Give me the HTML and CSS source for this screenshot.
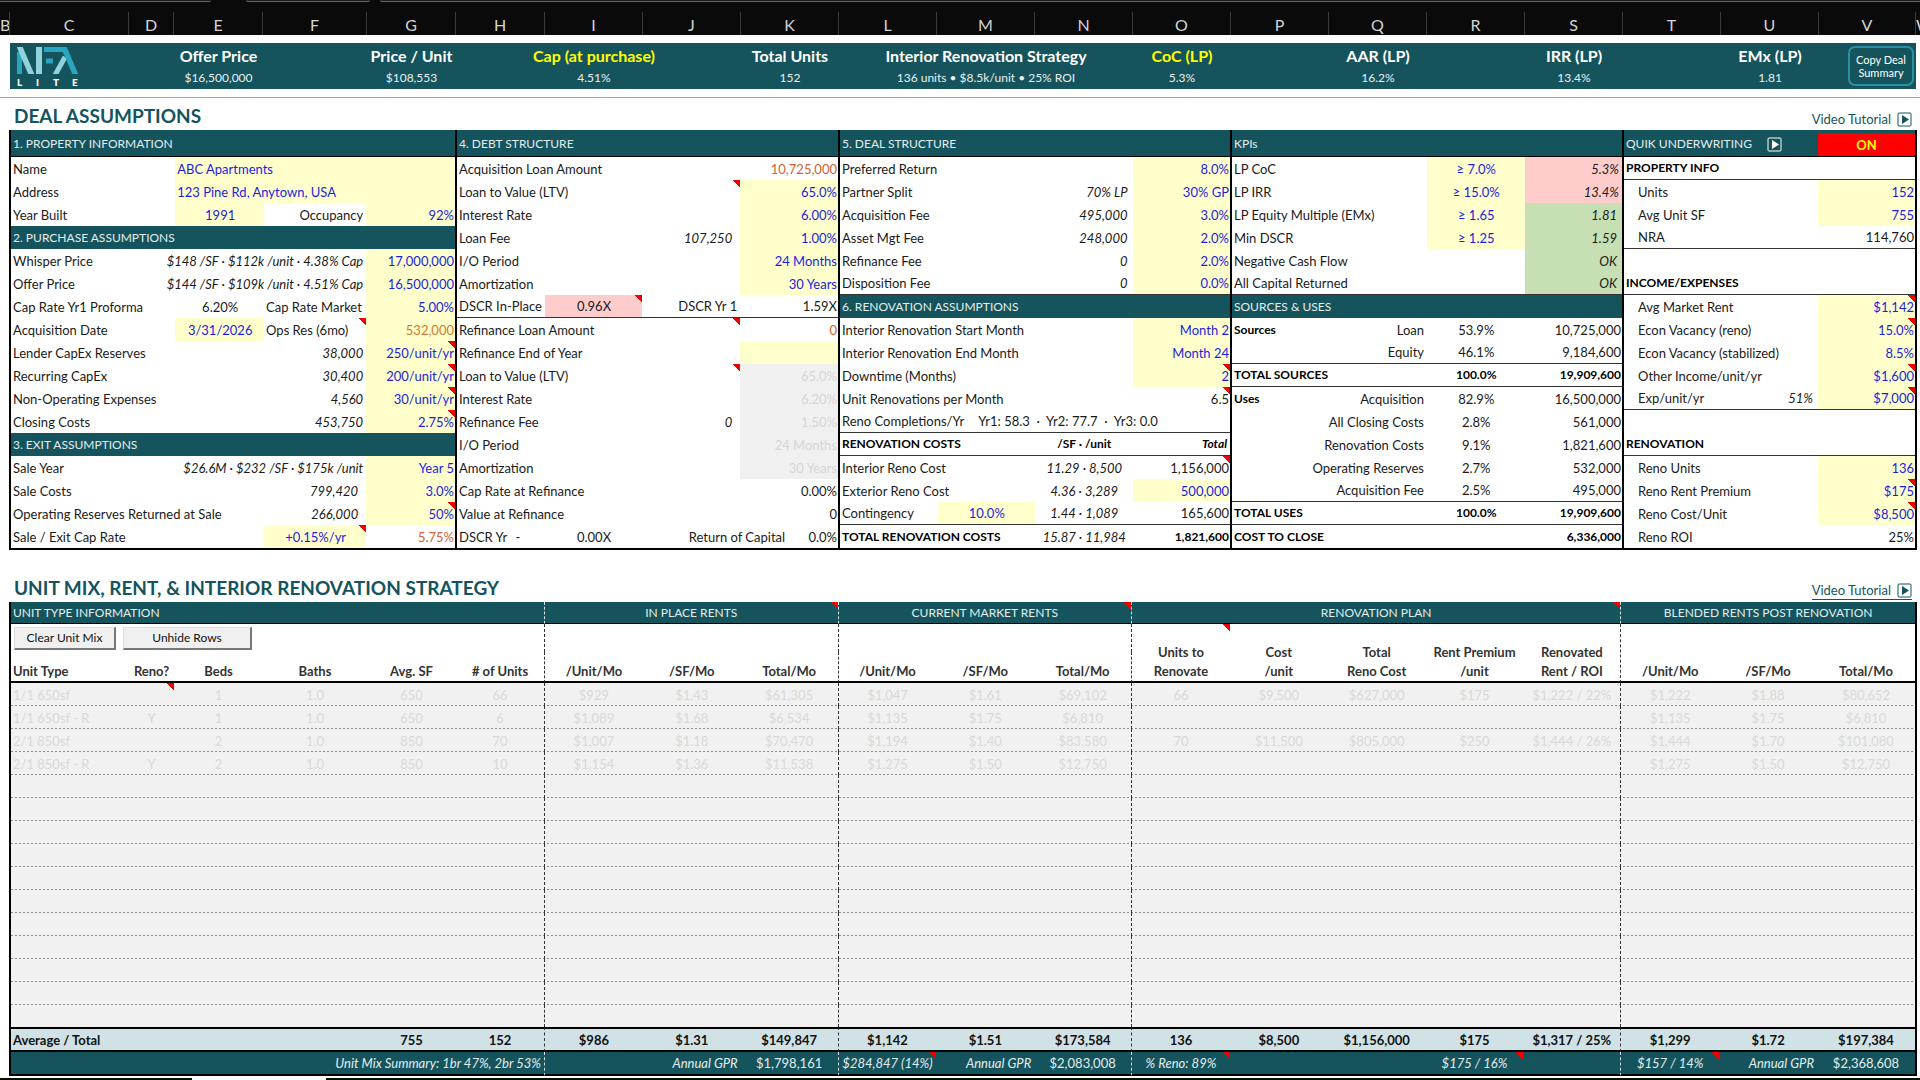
FILE: index.html
```html
<!DOCTYPE html>
<html lang="en">
<head>
<meta charset="utf-8">
<title>Deal Assumptions</title>
<link rel="stylesheet" href="styles.css">
</head>
<body>
<header class="ruler">
  <div class="tabs"><span class="tab tab-a"></span><span class="tab tab-b"></span><span class="tab tab-c"></span></div>
  <div class="letters">
    <span>B</span><span>C</span><span>D</span><span>E</span><span>F</span><span>G</span><span>H</span><span>I</span><span>J</span><span>K</span><span>L</span><span>M</span><span>N</span><span>O</span><span>P</span><span>Q</span><span>R</span><span>S</span><span>T</span><span>U</span><span>V</span><span>W</span>
  </div>
</header>

<section class="summary">
  <svg class="logo" viewBox="0 0 64 46" role="img" aria-label="NFA Lite">
    <defs><clipPath id="mark"><rect x="1" y="4" width="62" height="27"/></clipPath></defs>
    <g clip-path="url(#mark)" stroke-width="5">
      <line x1="3.500" y1="9" x2="3.500" y2="32" stroke="#2aa5bf"/>
      <line x1="2" y1="0" x2="17" y2="35" stroke="#8fd3dc" stroke-width="5.500"/>
      <line x1="23" y1="2" x2="23" y2="33" stroke="#8fd3dc" stroke-width="6"/>
      <line x1="28" y1="6.500" x2="48" y2="6.500" stroke="#2aa5bf"/>
      <line x1="30" y1="18" x2="37" y2="18" stroke="#2aa5bf"/>
      <line x1="49" y1="14" x2="38" y2="34" stroke="#8fd3dc"/>
      <line x1="46" y1="0" x2="61" y2="35" stroke="#2aa5bf" stroke-width="5.500"/>
    </g>
    <text y="43"><tspan x="1">L</tspan><tspan x="20">I</tspan><tspan x="37">T</tspan><tspan x="56">E</tspan></text>
  </svg>
  <dl class="kpi k-e"><dt>Offer Price</dt><dd>$16,500,000</dd></dl>
  <dl class="kpi k-g"><dt>Price / Unit</dt><dd>$108,553</dd></dl>
  <dl class="kpi k-i hot"><dt>Cap (at purchase)</dt><dd>4.51%</dd></dl>
  <dl class="kpi k-k"><dt>Total Units</dt><dd>152</dd></dl>
  <dl class="kpi k-m"><dt>Interior Renovation Strategy</dt><dd>136 units • $8.5k/unit • 25% ROI</dd></dl>
  <dl class="kpi k-o hot"><dt>CoC (LP)</dt><dd>5.3%</dd></dl>
  <dl class="kpi k-q"><dt>AAR (LP)</dt><dd>16.2%</dd></dl>
  <dl class="kpi k-s"><dt>IRR (LP)</dt><dd>13.4%</dd></dl>
  <dl class="kpi k-u"><dt>EMx (LP)</dt><dd>1.81</dd></dl>
  <button class="copy" type="button">Copy Deal Summary</button>
</section>

<main>
<div class="title-row">
  <h1>DEAL ASSUMPTIONS</h1>
  <a class="video" href="#deal">Video Tutorial <svg class="play" viewBox="0 0 15 15" aria-hidden="true"><rect x="1" y="1" width="13" height="13" rx="1"/><path d="M5 3L12 7.500L5 12Z"/></svg></a>
</div>

<div class="panels" id="deal">
<table class="panel">
<colgroup><col class="w-c"><col class="w-d"><col class="w-e"><col class="w-f"><col class="w-g"></colgroup>
<tr class="head"><th colspan="5">1. PROPERTY INFORMATION</th></tr>
<tr><td colspan="2">Name</td><td colspan="3" class="in left">ABC Apartments</td></tr>
<tr><td colspan="2">Address</td><td colspan="3" class="in left">123 Pine Rd, Anytown, USA</td></tr>
<tr><td colspan="2">Year Built</td><td class="in c">1991</td><td class="r p2">Occupancy</td><td class="in r">92%</td></tr>
<tr class="sub"><th colspan="5">2. PURCHASE ASSUMPTIONS</th></tr>
<tr><td>Whisper Price</td><td colspan="3" class="r i p2">$148 /SF · $112k /unit · 4.38% Cap</td><td class="in r">17,000,000</td></tr>
<tr><td>Offer Price</td><td colspan="3" class="r i p2">$144 /SF · $109k /unit · 4.51% Cap</td><td class="in r">16,500,000</td></tr>
<tr><td colspan="2">Cap Rate Yr1 Proforma</td><td class="c">6.20%</td><td>Cap Rate Market</td><td class="in r">5.00%</td></tr>
<tr><td colspan="2">Acquisition Date</td><td class="in c">3/31/2026</td><td class="note">Ops Res (6mo)</td><td class="in r calc">532,000</td></tr>
<tr><td colspan="3">Lender CapEx Reserves</td><td class="r i p2">38,000</td><td class="in r note">250/unit/yr</td></tr>
<tr><td colspan="3">Recurring CapEx</td><td class="r i p2">30,400</td><td class="in r note">200/unit/yr</td></tr>
<tr><td colspan="3">Non-Operating Expenses</td><td class="r i p2">4,560</td><td class="in r note">30/unit/yr</td></tr>
<tr><td colspan="3">Closing Costs</td><td class="r i p2">453,750</td><td class="in r note">2.75%</td></tr>
<tr class="sub"><th colspan="5">3. EXIT ASSUMPTIONS</th></tr>
<tr><td>Sale Year</td><td colspan="3" class="r i p2">$26.6M · $232 /SF · $175k /unit</td><td class="in r">Year 5</td></tr>
<tr><td colspan="3">Sale Costs</td><td class="r i p8">799,420</td><td class="in r">3.0%</td></tr>
<tr><td colspan="3">Operating Reserves Returned at Sale</td><td class="r i p8">266,000</td><td class="in r note">50%</td></tr>
<tr><td colspan="3">Sale / Exit Cap Rate</td><td class="in c note">+0.15%/yr</td><td class="r calc">5.75%</td></tr>
</table>

<table class="panel">
<colgroup><col class="w-h"><col><col><col></colgroup>
<tr class="head"><th colspan="4">4. DEBT STRUCTURE</th></tr>
<tr><td colspan="3">Acquisition Loan Amount</td><td class="r calc">10,725,000</td></tr>
<tr><td colspan="3" class="note">Loan to Value (LTV)</td><td class="in r">65.0%</td></tr>
<tr><td colspan="3">Interest Rate</td><td class="in r">6.00%</td></tr>
<tr><td colspan="2">Loan Fee</td><td class="r i p8">107,250</td><td class="in r">1.00%</td></tr>
<tr><td colspan="3">I/O Period</td><td class="in r">24 Months</td></tr>
<tr><td colspan="3">Amortization</td><td class="in r">30 Years</td></tr>
<tr class="rule"><td>DSCR In-Place</td><td class="bad c note">0.96X</td><td class="r p2">DSCR Yr 1</td><td class="r">1.59X</td></tr>
<tr><td colspan="3" class="note">Refinance Loan Amount</td><td class="r calc">0</td></tr>
<tr><td colspan="3">Refinance End of Year</td><td class="in r"></td></tr>
<tr><td colspan="3" class="note">Loan to Value (LTV)</td><td class="off r">65.0%</td></tr>
<tr><td colspan="3">Interest Rate</td><td class="off r">6.20%</td></tr>
<tr><td colspan="2">Refinance Fee</td><td class="r i p8">0</td><td class="off r">1.50%</td></tr>
<tr><td colspan="3">I/O Period</td><td class="off r">24 Months</td></tr>
<tr><td colspan="3">Amortization</td><td class="off r">30 Years</td></tr>
<tr><td colspan="3">Cap Rate at Refinance</td><td class="r">0.00%</td></tr>
<tr><td colspan="3">Value at Refinance</td><td class="r">0</td></tr>
<tr><td>DSCR Yr <span class="gap-s">-</span></td><td class="c">0.00X</td><td colspan="2" class="r">Return of Capital <span class="gap-l">0.0%</span></td></tr>
</table>

<table class="panel">
<colgroup><col><col><col><col></colgroup>
<tr class="head"><th colspan="4">5. DEAL STRUCTURE</th></tr>
<tr><td colspan="3">Preferred Return</td><td class="in r">8.0%</td></tr>
<tr><td colspan="2">Partner Split</td><td class="r i p4">70% LP</td><td class="in r">30% GP</td></tr>
<tr><td colspan="2">Acquisition Fee</td><td class="r i p4">495,000</td><td class="in r">3.0%</td></tr>
<tr><td colspan="2">Asset Mgt Fee</td><td class="r i p4">248,000</td><td class="in r">2.0%</td></tr>
<tr><td colspan="2">Refinance Fee</td><td class="r i p4">0</td><td class="in r">2.0%</td></tr>
<tr class="rule"><td colspan="2">Disposition Fee</td><td class="r i p4">0</td><td class="in r">0.0%</td></tr>
<tr class="sub"><th colspan="4">6. RENOVATION ASSUMPTIONS</th></tr>
<tr><td colspan="3">Interior Renovation Start Month</td><td class="in r">Month 2</td></tr>
<tr><td colspan="3">Interior Renovation End Month</td><td class="in r">Month 24</td></tr>
<tr><td colspan="3">Downtime (Months)</td><td class="in r note">2</td></tr>
<tr><td colspan="3">Unit Renovations per Month</td><td class="r note">6.5</td></tr>
<tr class="rule"><td colspan="4">Reno Completions/Yr <span class="gap-m">Yr1: 58.3 &nbsp;·&nbsp; Yr2: 77.7 &nbsp;·&nbsp; Yr3: 0.0</span></td></tr>
<tr class="rule b"><td colspan="2">RENOVATION COSTS</td><td class="c">/SF · /unit</td><td class="r i p2">Total</td></tr>
<tr><td colspan="2">Interior Reno Cost</td><td class="c i">11.29 · 8,500</td><td class="r note">1,156,000</td></tr>
<tr><td colspan="2">Exterior Reno Cost</td><td class="c i">4.36 · 3,289</td><td class="in r">500,000</td></tr>
<tr class="rule"><td>Contingency</td><td class="in c">10.0%</td><td class="c i">1.44 · 1,089</td><td class="r">165,600</td></tr>
<tr><td colspan="2" class="b">TOTAL RENOVATION COSTS</td><td class="c i">15.87 · 11,984</td><td class="r b">1,821,600</td></tr>
</table>

<table class="panel">
<colgroup><col><col><col><col></colgroup>
<tr class="head"><th colspan="4">KPIs</th></tr>
<tr><td colspan="2">LP CoC</td><td class="in c">≥ 7.0%</td><td class="bad r i p2">5.3%</td></tr>
<tr><td colspan="2">LP IRR</td><td class="in c">≥ 15.0%</td><td class="bad r i p2">13.4%</td></tr>
<tr><td colspan="2">LP Equity Multiple (EMx)</td><td class="in c">≥ 1.65</td><td class="good r i p4">1.81</td></tr>
<tr><td colspan="2">Min DSCR</td><td class="in c">≥ 1.25</td><td class="good r i p4">1.59</td></tr>
<tr><td colspan="3">Negative Cash Flow</td><td class="good r i p4">OK</td></tr>
<tr class="rule"><td colspan="3">All Capital Returned</td><td class="good r i p4">OK</td></tr>
<tr class="sub"><th colspan="4">SOURCES &amp; USES</th></tr>
<tr><td class="b">Sources</td><td class="r p2">Loan</td><td class="c">53.9%</td><td class="r">10,725,000</td></tr>
<tr class="rule"><td colspan="2" class="r p2">Equity</td><td class="c">46.1%</td><td class="r">9,184,600</td></tr>
<tr class="rule b"><td colspan="2">TOTAL SOURCES</td><td class="c">100.0%</td><td class="r">19,909,600</td></tr>
<tr><td class="b">Uses</td><td class="r p2">Acquisition</td><td class="c">82.9%</td><td class="r">16,500,000</td></tr>
<tr><td colspan="2" class="r p2">All Closing Costs</td><td class="c">2.8%</td><td class="r">561,000</td></tr>
<tr><td colspan="2" class="r p2">Renovation Costs</td><td class="c">9.1%</td><td class="r">1,821,600</td></tr>
<tr><td colspan="2" class="r p2">Operating Reserves</td><td class="c">2.7%</td><td class="r">532,000</td></tr>
<tr class="rule"><td colspan="2" class="r p2">Acquisition Fee</td><td class="c">2.5%</td><td class="r">495,000</td></tr>
<tr class="rule b"><td colspan="2">TOTAL USES</td><td class="c">100.0%</td><td class="r">19,909,600</td></tr>
<tr class="b"><td colspan="3">COST TO CLOSE</td><td class="r">6,336,000</td></tr>
</table>

<table class="panel quik">
<colgroup><col><col><col></colgroup>
<tr class="head"><th colspan="2">QUIK UNDERWRITING <a class="quik-play" href="#deal" aria-label="Play tutorial"><svg class="play" viewBox="0 0 15 15" aria-hidden="true"><rect x="1" y="1" width="13" height="13" rx="1"/><path d="M5 3L12 7.500L5 12Z"/></svg></a></th><th class="switch"><button type="button">ON</button></th></tr>
<tr class="rule b"><td colspan="3">PROPERTY INFO</td></tr>
<tr><td colspan="2" class="ind">Units</td><td class="in r">152</td></tr>
<tr><td colspan="2" class="ind">Avg Unit SF</td><td class="in r">755</td></tr>
<tr class="rule"><td colspan="2" class="ind">NRA</td><td class="r">114,760</td></tr>
<tr><td colspan="3"></td></tr>
<tr class="rule b"><td colspan="3">INCOME/EXPENSES</td></tr>
<tr><td colspan="2" class="ind">Avg Market Rent</td><td class="in r note">$1,142</td></tr>
<tr><td colspan="2" class="ind">Econ Vacancy (reno)</td><td class="in r note">15.0%</td></tr>
<tr><td colspan="2" class="ind">Econ Vacancy (stabilized)</td><td class="in r">8.5%</td></tr>
<tr><td colspan="2" class="ind">Other Income/unit/yr</td><td class="in r note">$1,600</td></tr>
<tr class="rule"><td class="ind">Exp/unit/yr</td><td class="r i p4">51%</td><td class="in r note">$7,000</td></tr>
<tr><td colspan="3"></td></tr>
<tr class="rule b"><td colspan="3">RENOVATION</td></tr>
<tr><td colspan="2" class="ind">Reno Units</td><td class="in r">136</td></tr>
<tr><td colspan="2" class="ind">Reno Rent Premium</td><td class="in r note">$175</td></tr>
<tr><td colspan="2" class="ind">Reno Cost/Unit</td><td class="in r note">$8,500</td></tr>
<tr><td colspan="2" class="ind">Reno ROI</td><td class="r">25%</td></tr>
</table>
</div>

<div class="title-row second">
  <h2>UNIT MIX, RENT, &amp; INTERIOR RENOVATION STRATEGY</h2>
  <a class="video lined" href="#mix">Video Tutorial <svg class="play" viewBox="0 0 15 15" aria-hidden="true"><rect x="1" y="1" width="13" height="13" rx="1"/><path d="M5 3L12 7.500L5 12Z"/></svg></a>
</div>

<table class="mix" id="mix">
<colgroup><col class="m-c"><col class="m-d"><col class="m-e"><col class="m-f"><col class="m-g"><col class="m-h"><col><col><col><col><col><col><col><col><col><col><col><col><col><col></colgroup>
<thead>
<tr class="groups"><th colspan="6" class="left d">UNIT TYPE INFORMATION</th><th colspan="3" class="d note">IN PLACE RENTS</th><th colspan="3" class="d note">CURRENT MARKET RENTS</th><th colspan="5" class="d note">RENOVATION PLAN</th><th colspan="3">BLENDED RENTS POST RENOVATION</th></tr>
<tr class="tools"><td colspan="6" class="d"><div class="buttons"><button class="clear" type="button">Clear Unit Mix</button><button class="unhide" type="button">Unhide Rows</button></div></td><td colspan="3" class="d"></td><td colspan="3" class="d"></td><th rowspan="2" class="note">Units to<br>Renovate</th><th rowspan="2">Cost<br>/unit</th><th rowspan="2">Total<br>Reno Cost</th><th rowspan="2">Rent Premium<br>/unit</th><th rowspan="2" class="d">Renovated<br>Rent / ROI</th><td colspan="3"></td></tr>
<tr class="labels"><th class="left">Unit Type</th><th>Reno?</th><th>Beds</th><th>Baths</th><th>Avg. SF</th><th class="d"># of Units</th><th>/Unit/Mo</th><th>/SF/Mo</th><th class="d">Total/Mo</th><th>/Unit/Mo</th><th>/SF/Mo</th><th class="d">Total/Mo</th><th>/Unit/Mo</th><th>/SF/Mo</th><th>Total/Mo</th></tr>
</thead>
<tbody>
<tr><td class="left">1/1 650sf</td><td class="note"></td><td>1</td><td>1.0</td><td>650</td><td class="d">66</td><td>$929</td><td>$1.43</td><td class="d">$61,305</td><td>$1,047</td><td>$1.61</td><td class="d">$69,102</td><td>66</td><td>$9,500</td><td>$627,000</td><td>$175</td><td class="d">$1,222 / 22%</td><td>$1,222</td><td>$1.88</td><td>$80,652</td></tr>
<tr><td class="left">1/1 650sf - R</td><td>Y</td><td>1</td><td>1.0</td><td>650</td><td class="d">6</td><td>$1,089</td><td>$1.68</td><td class="d">$6,534</td><td>$1,135</td><td>$1.75</td><td class="d">$6,810</td><td></td><td></td><td></td><td></td><td class="d"></td><td>$1,135</td><td>$1.75</td><td>$6,810</td></tr>
<tr><td class="left">2/1 850sf</td><td></td><td>2</td><td>1.0</td><td>850</td><td class="d">70</td><td>$1,007</td><td>$1.18</td><td class="d">$70,470</td><td>$1,194</td><td>$1.40</td><td class="d">$83,580</td><td>70</td><td>$11,500</td><td>$805,000</td><td>$250</td><td class="d">$1,444 / 26%</td><td>$1,444</td><td>$1.70</td><td>$101,080</td></tr>
<tr><td class="left">2/1 850sf - R</td><td>Y</td><td>2</td><td>1.0</td><td>850</td><td class="d">10</td><td>$1,154</td><td>$1.36</td><td class="d">$11,538</td><td>$1,275</td><td>$1.50</td><td class="d">$12,750</td><td></td><td></td><td></td><td></td><td class="d"></td><td>$1,275</td><td>$1.50</td><td>$12,750</td></tr>
<tr><td colspan="6" class="d"></td><td colspan="3" class="d"></td><td colspan="3" class="d"></td><td colspan="5" class="d"></td><td colspan="3"></td></tr>
<tr><td colspan="6" class="d"></td><td colspan="3" class="d"></td><td colspan="3" class="d"></td><td colspan="5" class="d"></td><td colspan="3"></td></tr>
<tr><td colspan="6" class="d"></td><td colspan="3" class="d"></td><td colspan="3" class="d"></td><td colspan="5" class="d"></td><td colspan="3"></td></tr>
<tr><td colspan="6" class="d"></td><td colspan="3" class="d"></td><td colspan="3" class="d"></td><td colspan="5" class="d"></td><td colspan="3"></td></tr>
<tr><td colspan="6" class="d"></td><td colspan="3" class="d"></td><td colspan="3" class="d"></td><td colspan="5" class="d"></td><td colspan="3"></td></tr>
<tr><td colspan="6" class="d"></td><td colspan="3" class="d"></td><td colspan="3" class="d"></td><td colspan="5" class="d"></td><td colspan="3"></td></tr>
<tr><td colspan="6" class="d"></td><td colspan="3" class="d"></td><td colspan="3" class="d"></td><td colspan="5" class="d"></td><td colspan="3"></td></tr>
<tr><td colspan="6" class="d"></td><td colspan="3" class="d"></td><td colspan="3" class="d"></td><td colspan="5" class="d"></td><td colspan="3"></td></tr>
<tr><td colspan="6" class="d"></td><td colspan="3" class="d"></td><td colspan="3" class="d"></td><td colspan="5" class="d"></td><td colspan="3"></td></tr>
<tr><td colspan="6" class="d"></td><td colspan="3" class="d"></td><td colspan="3" class="d"></td><td colspan="5" class="d"></td><td colspan="3"></td></tr>
<tr class="last"><td colspan="6" class="d"></td><td colspan="3" class="d"></td><td colspan="3" class="d"></td><td colspan="5" class="d"></td><td colspan="3"></td></tr>
</tbody>
<tfoot>
<tr class="total"><th class="left" colspan="4">Average / Total</th><td>755</td><td class="d">152</td><td>$986</td><td>$1.31</td><td class="d">$149,847</td><td>$1,142</td><td>$1.51</td><td class="d">$173,584</td><td>136</td><td>$8,500</td><td>$1,156,000</td><td>$175</td><td class="d">$1,317 / 25%</td><td>$1,299</td><td>$1.72</td><td>$197,384</td></tr>
<tr class="recap"><td colspan="6" class="r d i">Unit Mix Summary: 1br 47%, 2br 53%</td><td></td><td class="r i">Annual GPR</td><td class="d">$1,798,161</td><td class="i note">$284,847 (14%)</td><td class="r i">Annual GPR</td><td class="d">$2,083,008</td><td class="i note">% Reno: 89%</td><td></td><td></td><td class="i note">$175 / 16%</td><td class="d"></td><td class="i note">$157 / 14%</td><td class="r i">Annual GPR</td><td>$2,368,608</td></tr>
</tfoot>
</table>
</main>
<footer class="edge"><span></span><span></span></footer>
</body>
</html>
```
FILE: styles.css
```css
:root {
  --teal: #15545d;
  --input: #ffffcc;
  --blue: #1d1de0;
}
* { box-sizing: border-box; }
body {
  margin: 0;
  background: #fff;
  color: #1a1a1a;
  font: 13px/18px Lato, Carlito, Calibri, sans-serif;
  overflow-x: hidden;
}
h1, h2, dl, dd { margin: 0; }

/* column ruler */
.ruler { height: 35px; background: #0a0a0a; }
.tabs { height: 12px; display: flex; }
.tab { height: 2px; background: #1c1c1c; border-bottom: 1px solid #666; }
.tab-a { width: 11%; margin-right: 35px; border-bottom-right-radius: 4px; }
.tab-b { width: 124px; margin-right: 10px; border-radius: 0 0 4px 4px; }
.tab-c { flex: 1; border-bottom-left-radius: 4px; }
.letters, .summary {
  display: grid;
  grid-template-columns: minmax(0, 119fr) minmax(0, 45fr) minmax(0, 89fr) minmax(0, 104fr) minmax(0, 89fr) minmax(0, 89fr) repeat(13, minmax(0, 98fr)) minmax(0, 97fr);
}
.letters { grid-template-columns: minmax(0, 10fr) minmax(0, 119fr) minmax(0, 45fr) minmax(0, 89fr) minmax(0, 104fr) minmax(0, 89fr) minmax(0, 89fr) repeat(13, minmax(0, 98fr)) minmax(0, 97fr) minmax(0, 4fr); }
.letters span {
  height: 23px;
  border-right: 1px solid #3c3c3c;
  color: #d4d4d4;
  font-size: 16px;
  line-height: 25px;
  text-align: center;
  overflow: hidden;
}
.letters span:last-child { border: 0; }

/* summary band */
.summary {
  margin: 8px 4px 0 10px;
  height: 46px;
  background: var(--teal);
  color: #e8f0f1;
  align-items: center;
}
.logo { width: 64px; height: 46px; margin-left: 6px; }
.logo text { fill: #fff; font: 900 10px Lato, sans-serif; }
.kpi { grid-row: 1; justify-self: center; text-align: center; white-space: nowrap; }
.kpi dt { font-size: 16px; font-weight: 700; color: #fff; padding-top: 3px; line-height: 20px; }
.kpi dd { font-size: 12px; line-height: 23px; }
.hot dt { color: #ff0; }
.k-e { grid-column: 3; } .k-g { grid-column: 5; } .k-i { grid-column: 7; }
.k-k { grid-column: 9; } .k-m { grid-column: 11; } .k-o { grid-column: 13; }
.k-q { grid-column: 15; } .k-s { grid-column: 17; } .k-u { grid-column: 19; }
.copy {
  grid-column: 20; grid-row: 1;
  justify-self: end;
  width: 66px; height: 40px; margin-right: 2px; padding: 0;
  background: var(--teal);
  border: 2px solid #2a8fa0;
  border-radius: 7px;
  color: #fff;
  font: 11px/13px Lato, Carlito, sans-serif;
}

/* section titles */
main { margin-top: 8px; border-top: 1px solid #a6a6a6; padding: 0 3px 0 9px; }
.title-row { display: flex; justify-content: space-between; align-items: flex-end; height: 32px; padding: 0 5px 0 5px; color: var(--teal); }
.title-row h1, .title-row h2 { font-size: 19px; font-weight: 700; line-height: 28px; }
.second { height: 52px; }
.video { display: flex; align-items: center; gap: 6px; color: var(--teal); text-decoration: none; line-height: 18px; margin-bottom: 2px; }
.lined { border-bottom: 1px solid var(--teal); }
.play { display: block; width: 15px; height: 15px; }
.play rect { fill: none; stroke: currentColor; stroke-width: 1; }
.play path { fill: currentColor; }

/* assumption panels */
.panels {
  display: grid;
  grid-template-columns: minmax(0, 446fr) minmax(0, 383fr) minmax(0, 392fr) minmax(0, 392fr) minmax(0, 293fr);
  border: solid #000;
  border-width: 0 0 2px 2px;
}
table { width: 100%; table-layout: fixed; border-spacing: 0; white-space: nowrap; }
.panel { border-right: 2px solid #000; }
td, th { padding: 0 1px 0 2px; text-align: left; font-weight: 400; overflow: visible; }
.panel tr { height: 23px; }
.panel .head { height: 27px; }
.panel th { background: var(--teal); color: #e3edee; font-size: 12px; }
.head th { border-bottom: 1px solid #000; }
.panel .head th { padding-top: 1px; }
.rule td { border-bottom: 1px solid #333; }
.w-c { width: 27%; } .w-d { width: 10%; } .w-e { width: 20%; } .w-f { width: 23%; } .w-g { width: 20%; }
.w-h { width: 23%; }
td.in { background-color: var(--input); color: var(--blue); }
td.calc { color: #cf6430; }
.in.calc { color: #cf7a30; }
.bad { background-color: #ffcccc; }
.good { background-color: #c6e0b4; }
.off { background-color: #f0f0f0; color: #d6d6d6; }
.c { text-align: center; }
.r { text-align: right; }
.i { font-style: italic; }
.b, .b td { font-size: 12px; font-weight: 700; color: #000; }
.p2 { padding-right: 3px; }
.p4 { padding-right: 5px; }
.p8 { padding-right: 8px; }
.ind { padding-left: 14px; }
.left { text-align: left; }
.note { background-image: linear-gradient(225deg, #f00000 5px, transparent 5px); background-size: 7px 7px; background-position: top right; background-repeat: no-repeat; }
.panel .in.left { padding-left: 2px; }
.gap-s { margin-left: 5px; }
.gap-m { margin-left: 11px; }
.gap-l { margin-left: 20px; }
.quik-play { display: inline-block; vertical-align: middle; margin-left: 12px; color: #fff; }
.panel .head .switch { padding: 3px 0 0; }
.switch button { display: block; width: 100%; height: 23px; border: 0; padding: 0; background: #f00; color: #ff0; font: 700 13px/18px Lato, Carlito, sans-serif; }

/* unit mix table */
.mix { border: solid #000; border-width: 0 2px 0 2px; }
.m-c { width: 118px; } .m-d { width: 45px; } .m-e, .m-g, .m-h { width: 89px; } .m-f { width: 104px; }
.mix td, .mix th { text-align: center; padding: 0 1px; }
.mix .left { text-align: left; padding-left: 2px; }
.mix .r { text-align: right; padding-right: 3px; }
.mix .d { border-right: 1px dashed #333; }
.groups { height: 22px; }
.groups th { background-color: var(--teal); color: #e3edee; border-bottom: 1px solid #000; font-size: 12px; }
.groups .d.d, .recap .d.d { border-right-color: #d5e2e4; }
.tools { height: 28px; }
.tools td { vertical-align: top; }
.tools th, .labels th { vertical-align: bottom; font-weight: 700; line-height: 19px; border-bottom: 2px solid #000; color: #333; }
.labels { height: 31px; }
.buttons { display: flex; gap: 7px; padding: 3px 0 0 2px; height: 26px; }
.buttons button {
  height: 23px; padding: 0;
  background: #f0f0f0;
  border: solid #777; border-width: 0 2px 2px 0;
  border-top: 1px solid #ddd; border-left: 1px solid #ddd;
  color: #111;
  font: 12px/18px Lato, Carlito, sans-serif;
}
.clear { width: 102px; }
.unhide { width: 129px; }
.mix tbody tr {
  height: 23px;
  background: repeating-linear-gradient(90deg, #8c8c8c 0 2px, transparent 2px 4px) bottom / 100% 1px no-repeat #f1f1f1;
}
.mix tbody td { color: #d9d9d9; }
.mix tbody .last { height: 22px; background: #f1f1f1; }
.total { height: 25px; }
.total td, .total th { background-color: #d0e2e6; color: #111; font-weight: 700; border-top: 2px solid #000; border-bottom: 2px solid #000; }
.recap { height: 24px; }
.recap td { background-color: var(--teal); color: #e3edee; border-bottom: 2px solid #000; }

.edge { display: flex; justify-content: space-between; height: 2px; margin-top: 2px; }
.edge span { background: #0a0f05; width: 10%; }
.edge span + span { width: 83%; }
```
